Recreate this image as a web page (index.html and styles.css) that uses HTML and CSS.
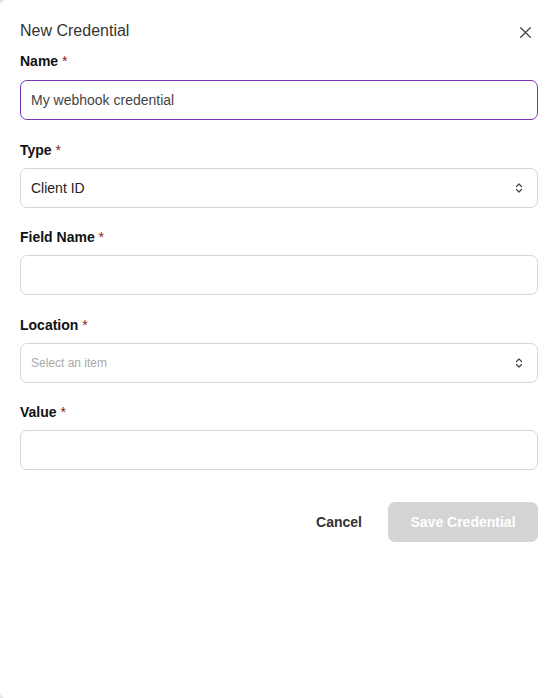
FILE: index.html
```html
<!DOCTYPE html>
<html lang="en">
<head>
    <meta charset="UTF-8">
    <meta name="viewport" content="width=device-width, initial-scale=1.0">
    <title>New Credential</title>
    <link rel="stylesheet" href="styles.css">
</head>
<body>
    <div class="dialog">
        <div class="dialog-header">
            <h2>New Credential</h2>
            <button class="close-btn" aria-label="Close">
                <svg width="11" height="11" viewBox="0 0 11 11"><path d="M0.7 0.7L10.3 10.3M10.3 0.7L0.7 10.3" stroke="#444" stroke-width="1.3" stroke-linecap="round"/></svg>
            </button>
        </div>

        <div class="field">
            <label>Name <span class="req">*</span></label>
            <div class="control focused">My webhook credential</div>
        </div>

        <div class="field">
            <label>Type <span class="req">*</span></label>
            <div class="control select">
                <span>Client ID</span>
                <svg class="chev" width="8" height="12" viewBox="0 0 8 12"><path d="M1.5 4.5L4 2L6.5 4.5M1.5 7.5L4 10L6.5 7.5" fill="none" stroke="#444" stroke-width="1.2" stroke-linecap="round" stroke-linejoin="round"/></svg>
            </div>
        </div>

        <div class="field">
            <label>Field Name <span class="req">*</span></label>
            <div class="control"></div>
        </div>

        <div class="field">
            <label>Location <span class="req">*</span></label>
            <div class="control select">
                <span class="placeholder">Select an item</span>
                <svg class="chev" width="8" height="12" viewBox="0 0 8 12"><path d="M1.5 4.5L4 2L6.5 4.5M1.5 7.5L4 10L6.5 7.5" fill="none" stroke="#444" stroke-width="1.2" stroke-linecap="round" stroke-linejoin="round"/></svg>
            </div>
        </div>

        <div class="field">
            <label>Value <span class="req">*</span></label>
            <div class="control"></div>
        </div>

        <div class="actions">
            <button class="cancel-btn">Cancel</button>
            <button class="save-btn" disabled>Save Credential</button>
        </div>
    </div>
</body>
</html>
```

FILE: styles.css
```css
html, body {
    margin: 0;
    height: 100%;
    background: #e4e4e4;
}
body {
    font-family: "Liberation Sans", Arial, sans-serif;
    color: #222;
}
.dialog {
    background: #fff;
    height: 100%;
    box-sizing: border-box;
    padding: 21px 20px 0 20px;
    border-radius: 6px 0 0 6px;
}
.dialog-header {
    display: flex;
    justify-content: space-between;
    align-items: center;
    height: 20px;
}
.dialog-header h2 {
    margin: 0;
    font-size: 16px;
    font-weight: normal;
    color: #333;
}
.close-btn {
    border: none;
    background: none;
    padding: 0;
    margin-right: 7px;
    margin-top: 2px;
    width: 11px;
    height: 11px;
    display: flex;
    cursor: pointer;
}
.field {
    display: flex;
    flex-direction: column;
}
.field + .field {
    margin-top: 19.5px;
}
.dialog-header + .field {
    margin-top: 10px;
}
.field label {
    font-size: 14px;
    font-weight: bold;
    color: #111;
    line-height: 20px;
    margin-bottom: 8px;
}
.dialog-header + .field label {
    margin-bottom: 9px;
}
.req {
    color: #8a1c1c;
    font-weight: normal;
}
.control {
    height: 40px;
    box-sizing: border-box;
    border: 1px solid #d6d6d6;
    border-radius: 7px;
    padding: 0 14px 0 10px;
    display: flex;
    align-items: center;
    font-size: 14px;
    color: #444;
}
.control.focused {
    border-color: #7a35b5;
}
.control.select {
    justify-content: space-between;
    color: #222;
}
.placeholder {
    font-size: 12px;
    color: #aaa;
}
.chev {
    display: block;
}
.actions {
    display: flex;
    justify-content: flex-end;
    align-items: center;
    gap: 26px;
    margin-top: 31.5px;
}
.cancel-btn, .save-btn {
    font-family: inherit;
    font-size: 14px;
    font-weight: bold;
    border: none;
    cursor: pointer;
}
.cancel-btn {
    background: none;
    color: #333;
    padding: 0;
}
.save-btn {
    background: #d4d4d4;
    color: #fff;
    height: 40px;
    width: 150px;
    border-radius: 7px;
}
.save-btn:disabled {
    cursor: not-allowed;
}
```
